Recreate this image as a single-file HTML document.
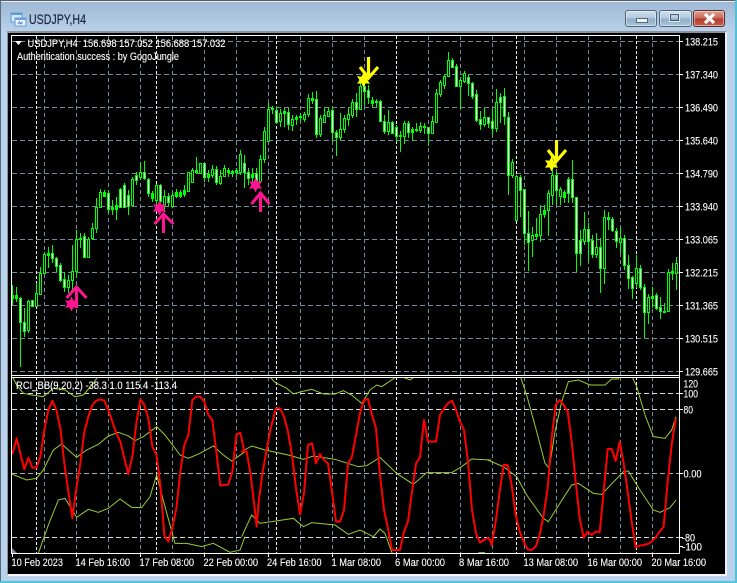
<!DOCTYPE html>
<html><head><meta charset="utf-8"><title>USDJPY,H4</title>
<style>
html,body{margin:0;padding:0;background:#fff}
#w{position:relative;width:737px;height:583px;overflow:hidden;background:#b9d2ec}
#tb{position:absolute;left:0;top:0;width:737px;height:33px;background:linear-gradient(#9db7d2,#bad2ec)}
.b{position:absolute;top:10px;height:17px;border:1px solid #4f6478;border-radius:3px;box-sizing:border-box;box-shadow:inset 0 0 0 1px rgba(255,255,255,.45);background:linear-gradient(#cfdfee 0,#b0c8df 48%,#8fadc9 52%,#a9c4dc 100%)}
svg{position:absolute;left:0;top:0}
text{font-family:"Liberation Sans",sans-serif}
</style></head><body><div id="w"><div id="tb"></div>
<div style="position:absolute;left:0;top:0;width:737px;height:1px;background:#5a5f66"></div>
<div style="position:absolute;left:0;top:1px;width:737px;height:1px;background:#e8eef4"></div>
<div style="position:absolute;left:0;top:0;width:1px;height:583px;background:#5a6a78"></div>
<div style="position:absolute;left:735px;top:0;width:2px;height:583px;background:#4fc0d8"></div>
<div style="position:absolute;left:0;top:581px;width:737px;height:2px;background:#4fc6dc"></div>
<div class="b" style="left:625px;width:32px"><div style="position:absolute;left:10px;top:7px;width:10px;height:3px;background:#eef3f8;border:1px solid #5a6a7c"></div></div>
<div class="b" style="left:659px;width:33px"><div style="position:absolute;left:10px;top:3px;width:7px;height:5px;border:1px solid #46586c;outline:1px solid #dfe8f0"></div></div>
<div class="b" style="left:693px;width:32px;border-color:#5a2a30;background:linear-gradient(#e0a090 0,#c96a58 48%,#b63a2a 52%,#c4604c 100%)"></div>
<div style="position:absolute;left:7px;top:31px;width:720px;height:545px;box-sizing:border-box;border-top:2px solid #8a939c;border-left:1px solid #8a939c;border-right:2px solid #eef4f9;border-bottom:2px solid #f2f6fa;background:#000"></div>
<svg width="737" height="583" viewBox="0 0 737 583">
<defs>
<polygon id="s" points="0,-7.5 2,-3.4 6.5,-3.75 4,0 6.5,3.75 2,3.4 0,7.5 -2,3.4 -6.5,3.75 -4,0 -6.5,-3.75 -2,-3.4"/>
<clipPath id="p"><rect x="12" y="377" width="667" height="176"/></clipPath>
</defs>
<!-- title icon and close glyph -->
<g shape-rendering="crispEdges">
<rect x="11" y="13" width="11" height="9" fill="#d8e8f8" stroke="#5f9ad8"/><rect x="11" y="13" width="11" height="2" fill="#5f9ad8"/>
<rect x="15" y="18" width="11" height="8" fill="#eaf3fc" stroke="#5f9ad8"/><rect x="15" y="18" width="11" height="2" fill="#6ba4e0"/>
</g>
<path d="M18 24l1.5-2 1.5 2 1.5-2" fill="none" stroke="#3c78c0"/>
<path d="M705 14l9 9M714 14l-9 9" stroke="#fff" stroke-width="3.2"/>
<text x="29" y="24" font-size="13.5" fill="#16243a" stroke="#16243a" stroke-width=".15" textLength="57" lengthAdjust="spacingAndGlyphs">USDJPY,H4</text>
<!-- grid -->
<g fill="none" stroke="#778899" shape-rendering="crispEdges">
<path stroke-dasharray="5 3" d="M12 41.5H679M12 74.5H679M12 107.5H679M12 140.5H679M12 173.5H679M12 206.5H679M12 239.5H679M12 272.5H679M12 305.5H679M12 338.5H679M12 371.5H679"/>
<path stroke-dasharray="4 3" d="M44.5 36V375M76.5 36V375M108.5 36V375M140.5 36V375M172.5 36V375M204.5 36V375M236.5 36V375M268.5 36V375M300.5 36V375M332.5 36V375M364.5 36V375M428.5 36V375M460.5 36V375M492.5 36V375M524.5 36V375M556.5 36V375M588.5 36V375M620.5 36V375M652.5 36V375"/>
<path stroke-dasharray="4 3" d="M44.5 377V553M76.5 377V553M108.5 377V553M140.5 377V553M172.5 377V553M204.5 377V553M236.5 377V553M268.5 377V553M300.5 377V553M332.5 377V553M364.5 377V553M428.5 377V553M460.5 377V553M492.5 377V553M524.5 377V553M556.5 377V553M588.5 377V553M620.5 377V553M652.5 377V553"/>
</g>
<g fill="none" stroke="#fff" shape-rendering="crispEdges">
<path stroke-dasharray="3 2" d="M36.5 36V375M156.5 36V375M276.5 36V375M396.5 36V375M516.5 36V375M636.5 36V375M36.5 377V553M156.5 377V553M276.5 377V553M396.5 377V553M516.5 377V553M636.5 377V553"/>
<path stroke="#d8dde2" stroke-dasharray="5 3" d="M12 393.5H679M12 409.5H679M12 537.5H679"/>
<path stroke="#a8b0b8" stroke-dasharray="5 3" d="M12 473.5H679"/>
</g>
<!-- wicks -->
<path fill="none" stroke="#00ff00" shape-rendering="crispEdges" d="M12.5 285V305M16.5 287V302M20.5 297V367M24.5 308V337M28.5 300V333M32.5 300V307M36.5 283V307M40.5 267V295M44.5 252V273M48.5 247V268M52.5 245V263M56.5 257V272M60.5 263V282M64.5 272V292M68.5 275V293M72.5 245V290M76.5 230V278M80.5 233V248M84.5 233V258M88.5 237V258M92.5 223V240M96.5 198V233M100.5 189V208M104.5 190V197M108.5 190V213M112.5 200V215M116.5 197V220M120.5 188V208M124.5 183V208M128.5 190V215M132.5 177V206M136.5 172V185M140.5 162V180M144.5 161V180M148.5 178V197M152.5 191V202M156.5 184V205M160.5 184V203M164.5 190V212M168.5 193V207M172.5 192V207M176.5 189V198M180.5 190V198M184.5 185V197M188.5 172V192M192.5 168V183M196.5 157V173M200.5 163V173M204.5 163V182M208.5 170V182M212.5 165V178M216.5 166V185M220.5 170V185M224.5 165V177M228.5 168V177M232.5 170V177M236.5 168V177M240.5 150V175M244.5 155V188M248.5 168V185M252.5 168V187M256.5 168V185M260.5 155V182M264.5 127V163M268.5 103V142M272.5 106V114M276.5 106V124M280.5 109V127M284.5 108V127M288.5 108V130M292.5 115V131M296.5 115V125M300.5 113V122M304.5 112V122M308.5 94V117M312.5 92V104M316.5 91V138M320.5 115V137M324.5 108V122M328.5 107V117M332.5 107V142M336.5 130V156M340.5 113V140M344.5 115V133M348.5 108V126M352.5 99V118M356.5 93V117M360.5 83V110M364.5 75V106M368.5 85V104M372.5 97V107M376.5 99V107M380.5 100V121M384.5 115V134M388.5 110V135M392.5 121V134M396.5 125V142M400.5 131V152M404.5 121V144M408.5 121V138M412.5 127V141M416.5 123V132M420.5 122V133M424.5 123V134M428.5 127V146M432.5 116V133M436.5 89V122M440.5 80V97M444.5 74V89M448.5 52V76M452.5 58V68M456.5 64V87M460.5 77V109M464.5 71V83M468.5 75V96M472.5 82V99M476.5 90V122M480.5 111V130M484.5 108V127M488.5 117V128M492.5 110V135M496.5 89V132M500.5 93V123M504.5 88V125M508.5 112V195M512.5 159V178M516.5 175V220M520.5 175V217M524.5 189V245M528.5 211V271M532.5 227V257M536.5 218V240M540.5 205V242M544.5 205V218M548.5 190V236M552.5 163V205M556.5 172V205M560.5 187V205M564.5 190V203M568.5 177V203M572.5 160V203M576.5 197V272M580.5 230V266M584.5 212V245M588.5 223V262M592.5 235V258M596.5 233V258M600.5 238V293M604.5 210V284M608.5 212V230M612.5 217V232M616.5 228V248M620.5 227V253M624.5 235V270M628.5 255V289M632.5 276V299M636.5 255V288M640.5 265V290M644.5 284V338M648.5 294V324M652.5 287V308M656.5 293V310M660.5 297V319M664.5 303V313M668.5 269V311M672.5 263V280M676.5 257V290"/>
<!-- body outer -->
<path fill="none" stroke="#00ff00" stroke-width="3" shape-rendering="crispEdges" d="M12.5 295V299M16.5 295V299M20.5 298V323M24.5 322V332M28.5 301V331M32.5 300V307M36.5 293V307M40.5 273V295M44.5 254V274M48.5 253V256M52.5 253V259M56.5 258V267M60.5 265V281M64.5 279V288M68.5 280V288M72.5 271V281M76.5 239V272M80.5 238V240M84.5 236V258M88.5 239V258M92.5 228V239M96.5 207V229M100.5 192V208M104.5 192V197M108.5 193V210M112.5 207V210M116.5 205V210M120.5 189V208M124.5 185V208M128.5 195V207M132.5 179V206M136.5 175V181M140.5 172V178M144.5 172V179M148.5 179V194M152.5 193V199M156.5 185V201M160.5 185V202M164.5 196V206M168.5 196V203M172.5 195V207M176.5 192V197M180.5 192V197M184.5 190V195M188.5 172V192M192.5 170V183M196.5 170V173M200.5 163V174M204.5 163V178M208.5 174V178M212.5 169V176M216.5 169V183M220.5 176V184M224.5 168V177M228.5 170V173M232.5 171V174M236.5 170V173M240.5 154V173M244.5 163V173M248.5 172V179M252.5 174V178M256.5 173V183M260.5 159V182M264.5 131V160M268.5 109V142M272.5 108V110M276.5 110V123M280.5 113V122M284.5 111V114M288.5 112V125M292.5 119V126M296.5 117V120M300.5 116V118M304.5 114V120M308.5 98V115M312.5 98V101M316.5 99V135M320.5 118V135M324.5 115V123M328.5 111V117M332.5 110V133M336.5 132V138M340.5 129V138M344.5 118V130M348.5 114V120M352.5 102V116M356.5 102V110M360.5 86V110M364.5 86V92M368.5 90V98M372.5 100V104M376.5 101V103M380.5 101V122M384.5 121V132M388.5 122V132M392.5 122V134M396.5 127V137M400.5 135V137M404.5 123V137M408.5 123V133M412.5 129V133M416.5 129V131M420.5 126V131M424.5 126V128M428.5 127V134M432.5 121V134M436.5 93V123M440.5 82V95M444.5 76V86M448.5 60V77M452.5 60V68M456.5 66V87M460.5 80V87M464.5 73V82M468.5 77V84M472.5 83V97M476.5 94V121M480.5 119V125M484.5 117V125M488.5 117V124M492.5 121V129M496.5 102V129M500.5 97V103M504.5 96V117M508.5 117V176M512.5 162V176M516.5 176V221M520.5 177V191M524.5 189V234M528.5 233V243M532.5 235V241M536.5 234V237M540.5 214V236M544.5 210V215M548.5 193V211M552.5 175V196M556.5 175V191M560.5 189V197M564.5 192V198M568.5 179V194M572.5 179V198M576.5 197V254M580.5 240V254M584.5 229V242M588.5 229V242M592.5 240V255M596.5 247V255M600.5 247V269M604.5 217V269M608.5 217V220M612.5 219V231M616.5 231V242M620.5 238V243M624.5 238V266M628.5 265V279M632.5 277V289M636.5 268V284M640.5 268V288M644.5 287V313M648.5 297V313M652.5 296V299M656.5 295V309M660.5 307V312M664.5 311V313M668.5 272V312M672.5 271V274M676.5 263V274"/>
<!-- black inner -->
<path fill="none" stroke="#000" shape-rendering="crispEdges" d="M28.5 302V330M36.5 294V306M40.5 274V294M44.5 255V273M68.5 281V287M72.5 272V280M76.5 240V271M88.5 240V257M92.5 229V238M96.5 208V228M100.5 193V207M132.5 180V205M140.5 173V177M156.5 186V200M164.5 197V205M172.5 196V206M188.5 173V191M192.5 171V182M200.5 164V173M212.5 170V175M220.5 177V183M224.5 169V176M240.5 155V172M260.5 160V181M264.5 132V159M268.5 110V141M280.5 114V121M292.5 120V125M304.5 115V119M308.5 99V114M320.5 119V134M324.5 116V122M328.5 112V116M340.5 130V137M344.5 119V129M348.5 115V119M352.5 103V115M360.5 87V109M388.5 123V131M404.5 124V136M420.5 127V130M432.5 122V133M436.5 94V122M440.5 83V94M444.5 77V85M448.5 61V76M460.5 81V86M464.5 74V81M484.5 118V124M496.5 103V128M512.5 163V175M516.5 177V220M532.5 236V240M540.5 215V235M548.5 194V210M552.5 176V195M560.5 190V196M584.5 230V241M596.5 248V254M604.5 218V268M620.5 239V242M636.5 269V283M648.5 298V312M668.5 273V311M676.5 264V273"/>
<!-- white inner -->
<path fill="none" stroke="#fff" shape-rendering="crispEdges" d="M20.5 299V322M24.5 323V331M32.5 301V306M52.5 254V258M56.5 259V266M60.5 266V280M64.5 280V287M84.5 237V257M108.5 194V209M120.5 190V207M124.5 186V207M128.5 196V206M136.5 176V180M144.5 173V178M148.5 180V193M160.5 186V201M168.5 197V202M204.5 164V177M216.5 170V182M244.5 164V172M248.5 173V178M256.5 174V182M276.5 111V122M288.5 113V124M316.5 100V134M332.5 111V132M336.5 133V137M356.5 103V109M364.5 87V91M368.5 91V97M380.5 102V121M384.5 122V131M392.5 123V133M396.5 128V136M408.5 124V132M428.5 128V133M452.5 61V67M456.5 67V86M468.5 78V83M472.5 84V96M476.5 95V120M480.5 120V124M488.5 118V123M492.5 122V128M500.5 98V102M504.5 97V116M508.5 118V175M520.5 178V190M524.5 190V233M528.5 234V242M556.5 176V190M568.5 180V193M572.5 180V197M576.5 198V253M580.5 241V253M588.5 230V241M592.5 241V254M600.5 248V268M612.5 220V230M616.5 232V241M624.5 239V265M628.5 266V278M632.5 278V288M640.5 269V287M644.5 288V312M656.5 296V308M660.5 308V311"/>
<!-- arrows and stars -->
<g fill="none" stroke="#ff1493" stroke-width="3">
<path d="M66.5 298L76.5 287L86.5 298M76.5 288V308"/>
<path d="M154.5 224L163.5 214L173.5 224M163.5 215V233"/>
<path d="M251.5 204L260.5 193L269.5 204M260.5 194V212"/>
</g>
<g fill="#ff1493"><use href="#s" x="71.5" y="304"/><use href="#s" x="159.5" y="208"/><use href="#s" x="255.5" y="185"/></g>
<g fill="none" stroke="#ffff00" stroke-width="3.2">
<path d="M360 67L368.5 78L378 67M368.5 57V77"/>
<path d="M548 150L556.5 161L566 150M556.5 140V160"/>
</g>
<g fill="#ffff00"><use href="#s" x="363.5" y="80"/><use href="#s" x="551.5" y="164"/></g>
<!-- pane 2 lines -->
<g clip-path="url(#p)">
<g fill="none" stroke="#9acd32">
<g transform="translate(0 375) scale(.33333)">
<polyline vector-effect="non-scaling-stroke" points="37,5 50,30 70,55 95,60 130,65 160,40 195,45 225,65 250,60 280,25 300,-5"/>
<polyline vector-effect="non-scaling-stroke" points="458,-5 470,12 482,-5"/>
<polyline vector-effect="non-scaling-stroke" points="37,298 80,315 110,310 130,285 160,225 185,207 205,225 230,247 260,225 295,208 325,183 355,172 385,183 405,197 430,185 470,155 495,180 540,240 565,250 600,235 640,213 670,240 695,258 735,230"/>
<polyline vector-effect="non-scaling-stroke" points="115,535 145,450 175,375 195,370 230,427 265,403 295,412 325,400 360,372 395,397 425,398 450,365 470,300 495,395 525,505 560,505 605,515 640,505 690,532 720,525 735,485"/>
</g>
<g transform="translate(245 375) scale(.33333)">
<polyline vector-effect="non-scaling-stroke" points="10,-5 20,10 32,-5"/>
<polyline vector-effect="non-scaling-stroke" points="65,-5 90,22 125,40 145,57 170,50 200,43 235,57 270,57 295,47 320,60 350,85 375,45 395,30 410,35 450,8 470,5 495,15 525,-5"/>
<polyline vector-effect="non-scaling-stroke" points="-10,230 20,213 60,225 130,240 175,253 205,243 270,253 340,275 365,272 405,247 455,295 505,328 545,293 620,293 650,275 680,252 738,255"/>
<polyline vector-effect="non-scaling-stroke" points="-10,485 20,420 45,445 100,437 145,430 175,455 200,443 270,450 310,478 345,465 385,485 405,462 420,475 445,545"/>
<polyline vector-effect="non-scaling-stroke" points="700,533 720,533"/>
</g>
<g transform="translate(490 375) scale(.33333)">
<polyline vector-effect="non-scaling-stroke" points="88,-5 110,60 140,170 165,265 178,280 195,170 215,80 235,20 265,15 300,30 345,30 365,12 385,12 392,-5"/>
<polyline vector-effect="non-scaling-stroke" points="422,-5 440,35 465,120 490,185 525,190 545,165 558,125"/>
<polyline vector-effect="non-scaling-stroke" points="-7,255 40,275 80,305 110,360 160,430 175,440 200,400 245,330 265,325 310,355 335,358 400,290 415,288 450,345 490,405 510,412 540,398 558,375"/>
</g>
</g>
<g fill="none" stroke="#ff0000" stroke-width="2" stroke-linejoin="round">
<g transform="translate(0 375) scale(.33333)"><polyline vector-effect="non-scaling-stroke" points="37,238 50,190 62,240 73,283 85,248 97,278 109,278 121,245 133,165 145,105 157,77 169,105 181,160 193,265 205,350 217,430 229,340 241,265 253,170 265,125 277,90 289,77 301,73 313,77 325,105 337,140 349,175 361,200 373,250 385,297 397,245 409,145 421,73 433,90 445,130 457,215 469,238 481,330 493,480 505,500 517,460 529,400 541,290 553,210 565,180 577,75 589,65 601,65 613,80 625,120 637,135 649,230 661,332 673,330 685,328 697,290 709,180 721,173 733,230"/></g>
<g transform="translate(245 375) scale(.33333)"><polyline vector-effect="non-scaling-stroke" points="-12,230 5,230 17,300 29,400 35,455 41,380 53,290 65,225 77,160 93,100 105,100 117,125 129,170 141,240 153,340 165,418 177,355 189,210 201,205 213,265 225,237 237,255 249,265 261,350 273,440 285,440 297,405 309,265 321,245 333,180 345,115 357,75 369,72 381,120 393,160 405,300 417,405 429,460 441,525 453,525 465,525 477,470 489,440 501,350 513,265 525,247 537,135 549,200 561,200 573,200 585,120 597,100 609,85 621,77 633,105 645,140 657,165 669,260 681,405 693,475 705,503 717,495 729,488"/></g>
<g transform="translate(490 375) scale(.33333)"><polyline vector-effect="non-scaling-stroke" points="-6,488 0,495 5,510 17,440 29,350 41,270 53,270 65,330 77,420 89,470 101,500 113,523 125,525 137,515 149,480 161,420 173,340 185,190 197,90 209,75 221,90 233,110 245,200 257,320 269,430 281,488 293,470 305,480 317,470 329,472 341,350 353,222 365,222 377,258 389,200 401,265 413,350 425,440 437,517 449,512 461,510 473,507 485,500 497,487 509,470 521,455 533,320 545,210 557,130"/></g>
</g>
</g>
<polygon points="12,548 12,553 17,553" fill="#778899"/>
<!-- frames -->
<g fill="none" stroke="#fff" shape-rendering="crispEdges">
<path d="M11.5 35.5H679.5V553.5H11.5ZM11.5 375.5H679.5M11.5 377.5H679.5"/>
<path d="M679 41.5H683M679 74.5H683M679 107.5H683M679 140.5H683M679 173.5H683M679 206.5H683M679 239.5H683M679 272.5H683M679 305.5H683M679 338.5H683M679 371.5H683M679 393.5H683M679 409.5H683M679 473.5H683M679 537.5H683M679 546.5H683M12.5 553V557M76.5 553V557M140.5 553V557M204.5 553V557M268.5 553V557M332.5 553V557M396.5 553V557M460.5 553V557M524.5 553V557M588.5 553V557M652.5 553V557"/>
</g>
<polygon points="15,41 22,41 18.5,45" fill="#fff"/>
<!-- text -->
<g fill="#fff" font-size="11" stroke="#fff" stroke-width=".12">
<text x="27.5" y="47" textLength="198" lengthAdjust="spacingAndGlyphs" xml:space="preserve">USDJPY,H4  156.698 157.052 156.688 157.032</text>
<text x="17" y="60" textLength="162" lengthAdjust="spacingAndGlyphs">Authentication success : by GogoJungle</text>
<text x="16" y="389" textLength="161" lengthAdjust="spacingAndGlyphs">RCI_BB(9,20,2) -38.3 1.0 115.4 -113.4</text>
<text x="685" y="45.5" textLength="33" lengthAdjust="spacingAndGlyphs">138.215</text>
<text x="685" y="78.5" textLength="33" lengthAdjust="spacingAndGlyphs">137.340</text>
<text x="685" y="111.5" textLength="33" lengthAdjust="spacingAndGlyphs">136.490</text>
<text x="685" y="144.5" textLength="33" lengthAdjust="spacingAndGlyphs">135.640</text>
<text x="685" y="177.5" textLength="33" lengthAdjust="spacingAndGlyphs">134.790</text>
<text x="685" y="210.5" textLength="33" lengthAdjust="spacingAndGlyphs">133.940</text>
<text x="685" y="243.5" textLength="33" lengthAdjust="spacingAndGlyphs">133.065</text>
<text x="685" y="276.5" textLength="33" lengthAdjust="spacingAndGlyphs">132.215</text>
<text x="685" y="309.5" textLength="33" lengthAdjust="spacingAndGlyphs">131.365</text>
<text x="685" y="342.5" textLength="33" lengthAdjust="spacingAndGlyphs">130.515</text>
<text x="685" y="375.5" textLength="33" lengthAdjust="spacingAndGlyphs">129.665</text>
<text x="683.5" y="387.5" textLength="14.5" lengthAdjust="spacingAndGlyphs">120</text>
<text x="683.5" y="397.5" textLength="14.5" lengthAdjust="spacingAndGlyphs">100</text>
<text x="683.5" y="413.5" textLength="9.5" lengthAdjust="spacingAndGlyphs">80</text>
<text x="683.5" y="477.5" textLength="18" lengthAdjust="spacingAndGlyphs">0.00</text>
<text x="682" y="541.5" textLength="13" lengthAdjust="spacingAndGlyphs">-80</text>
<text x="682" y="550.5" textLength="20" lengthAdjust="spacingAndGlyphs">-100</text>
<text x="11.5" y="566" textLength="51.5" lengthAdjust="spacingAndGlyphs">10 Feb 2023</text>
<text x="75.5" y="566" textLength="54.5" lengthAdjust="spacingAndGlyphs">14 Feb 16:00</text>
<text x="139.5" y="566" textLength="54.5" lengthAdjust="spacingAndGlyphs">17 Feb 08:00</text>
<text x="203.5" y="566" textLength="54.5" lengthAdjust="spacingAndGlyphs">22 Feb 00:00</text>
<text x="267" y="566" textLength="54.5" lengthAdjust="spacingAndGlyphs">24 Feb 16:00</text>
<text x="331.5" y="566" textLength="49.5" lengthAdjust="spacingAndGlyphs">1 Mar 08:00</text>
<text x="395" y="566" textLength="50" lengthAdjust="spacingAndGlyphs">6 Mar 00:00</text>
<text x="459" y="566" textLength="50" lengthAdjust="spacingAndGlyphs">8 Mar 16:00</text>
<text x="523.5" y="566" textLength="54.5" lengthAdjust="spacingAndGlyphs">13 Mar 08:00</text>
<text x="587.5" y="566" textLength="54.5" lengthAdjust="spacingAndGlyphs">16 Mar 00:00</text>
<text x="651.5" y="566" textLength="54.5" lengthAdjust="spacingAndGlyphs">20 Mar 16:00</text>
</g>
</svg>
</div></body></html>
